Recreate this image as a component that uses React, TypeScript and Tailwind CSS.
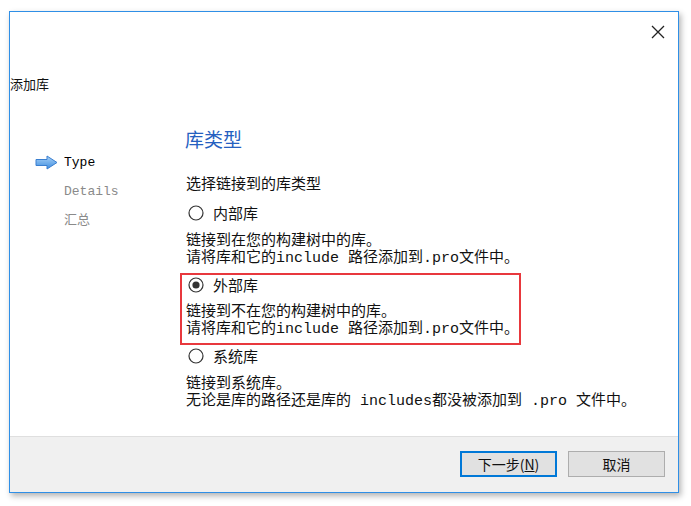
import React from "react";

const cjk = { fontFamily: '"Noto Sans CJK SC", "Noto Sans", sans-serif' };
const mixed = { fontFamily: '"Liberation Mono", "Noto Sans CJK SC", monospace' };

function Radio({ checked }: { checked?: boolean }) {
  return (
    <svg width="16" height="16" viewBox="0 0 16 16" className="shrink-0">
      <circle cx="8" cy="8" r="7" fill="#fff" stroke="#333" strokeWidth="1.2" />
      {checked && <circle cx="8" cy="8" r="3.6" fill="#333" />}
    </svg>
  );
}

function Arrow() {
  return (
    <svg width="23" height="15" viewBox="0 0 23 15">
      <defs>
        <linearGradient id="ag" x1="0" y1="0" x2="0" y2="1">
          <stop offset="0" stopColor="#a9d2f7" />
          <stop offset="1" stopColor="#3f8ee0" />
        </linearGradient>
      </defs>
      <path d="M1 4.5 H12 V1 L22 7.5 L12 14 V10.5 H1 Z" fill="url(#ag)" stroke="#3a7fd0" strokeWidth="1" strokeLinejoin="round" />
    </svg>
  );
}

export default function App() {
  return (
    <div className="w-[691px] h-[506px] bg-white pl-[9px] pt-[11px]">
      <div className="w-[670px] h-[482px] border border-[#2f8fe6] bg-white flex flex-col shadow-[2px_3px_6px_rgba(0,0,0,0.3)]">
        <div className="h-[40px] flex justify-end items-center pr-[13px]">
          <svg width="14" height="14" viewBox="0 0 14 14">
            <path d="M1 1 L13 13 M13 1 L1 13" stroke="#222" strokeWidth="1.3" />
          </svg>
        </div>
        <div className="mt-[22px] text-[13px] leading-[20px] text-[#111]" style={cjk}>添加库</div>
        <div className="flex-1 flex">
          <div className="w-[176px] pt-[54px] pl-[25px]">
            <div className="flex items-center h-[29px]">
              <Arrow />
              <span className="ml-[6px] text-[13px] text-black" style={mixed}>Type</span>
            </div>
            <div className="h-[29px] flex items-center pl-[29px] text-[13px] text-[#8a8a8a]" style={mixed}>Details</div>
            <div className="h-[29px] flex items-center pl-[29px] text-[13px] text-[#8a8a8a]" style={mixed}>汇总</div>
          </div>
          <div className="flex flex-col text-[15px] text-[#111]" style={mixed}>
            <div className="mt-[33px] text-[19px] leading-[24px] text-[#2560c0] -ml-[1px]" style={cjk}>库类型</div>
            <div className="mt-[22px] leading-[20px]" style={cjk}>选择链接到的库类型</div>
            <div className="mt-[10px] h-[20px] flex items-center gap-[9px] pl-[2px]" style={cjk}>
              <Radio />
              <span>内部库</span>
            </div>
            <div className="mt-[10px] leading-[17px] whitespace-nowrap">
              <div>链接到在您的构建树中的库。</div>
              <div>请将库和它的include 路径添加到.pro文件中。</div>
            </div>
            <div className="mt-[6px] -ml-[6px] w-[341px] border-2 border-[#e8383d] pl-[4px] pt-0 pb-[5px]">
              <div className="h-[20px] flex items-center gap-[9px] pl-[2px]" style={cjk}>
                <Radio checked />
                <span>外部库</span>
              </div>
              <div className="mt-[9px] leading-[17px] whitespace-nowrap">
                <div>链接到不在您的构建树中的库。</div>
                <div>请将库和它的include 路径添加到.pro文件中。</div>
              </div>
            </div>
            <div className="mt-[1px] h-[20px] flex items-center gap-[9px] pl-[2px]" style={cjk}>
              <Radio />
              <span>系统库</span>
            </div>
            <div className="mt-[10px] leading-[17px] whitespace-nowrap">
              <div>链接到系统库。</div>
              <div>无论是库的路径还是库的 includes都没被添加到 .pro 文件中。</div>
            </div>
          </div>
        </div>
        <div className="h-[56px] bg-[#f0f0f0] border-t border-[#dfdfdf] flex justify-end items-start pt-[14px] pr-[13px] gap-[11px]">
          <button className="w-[97px] h-[26px] bg-[#e1e1e1] border-2 border-[#0078d7] text-[14px] text-[#111] flex items-center justify-center" style={cjk}>
            下一步(<span className="underline">N</span>)
          </button>
          <button className="w-[97px] h-[26px] bg-[#e1e1e1] border border-[#adadad] text-[14px] text-[#111] flex items-center justify-center" style={cjk}>
            取消
          </button>
        </div>
      </div>
    </div>
  );
}
